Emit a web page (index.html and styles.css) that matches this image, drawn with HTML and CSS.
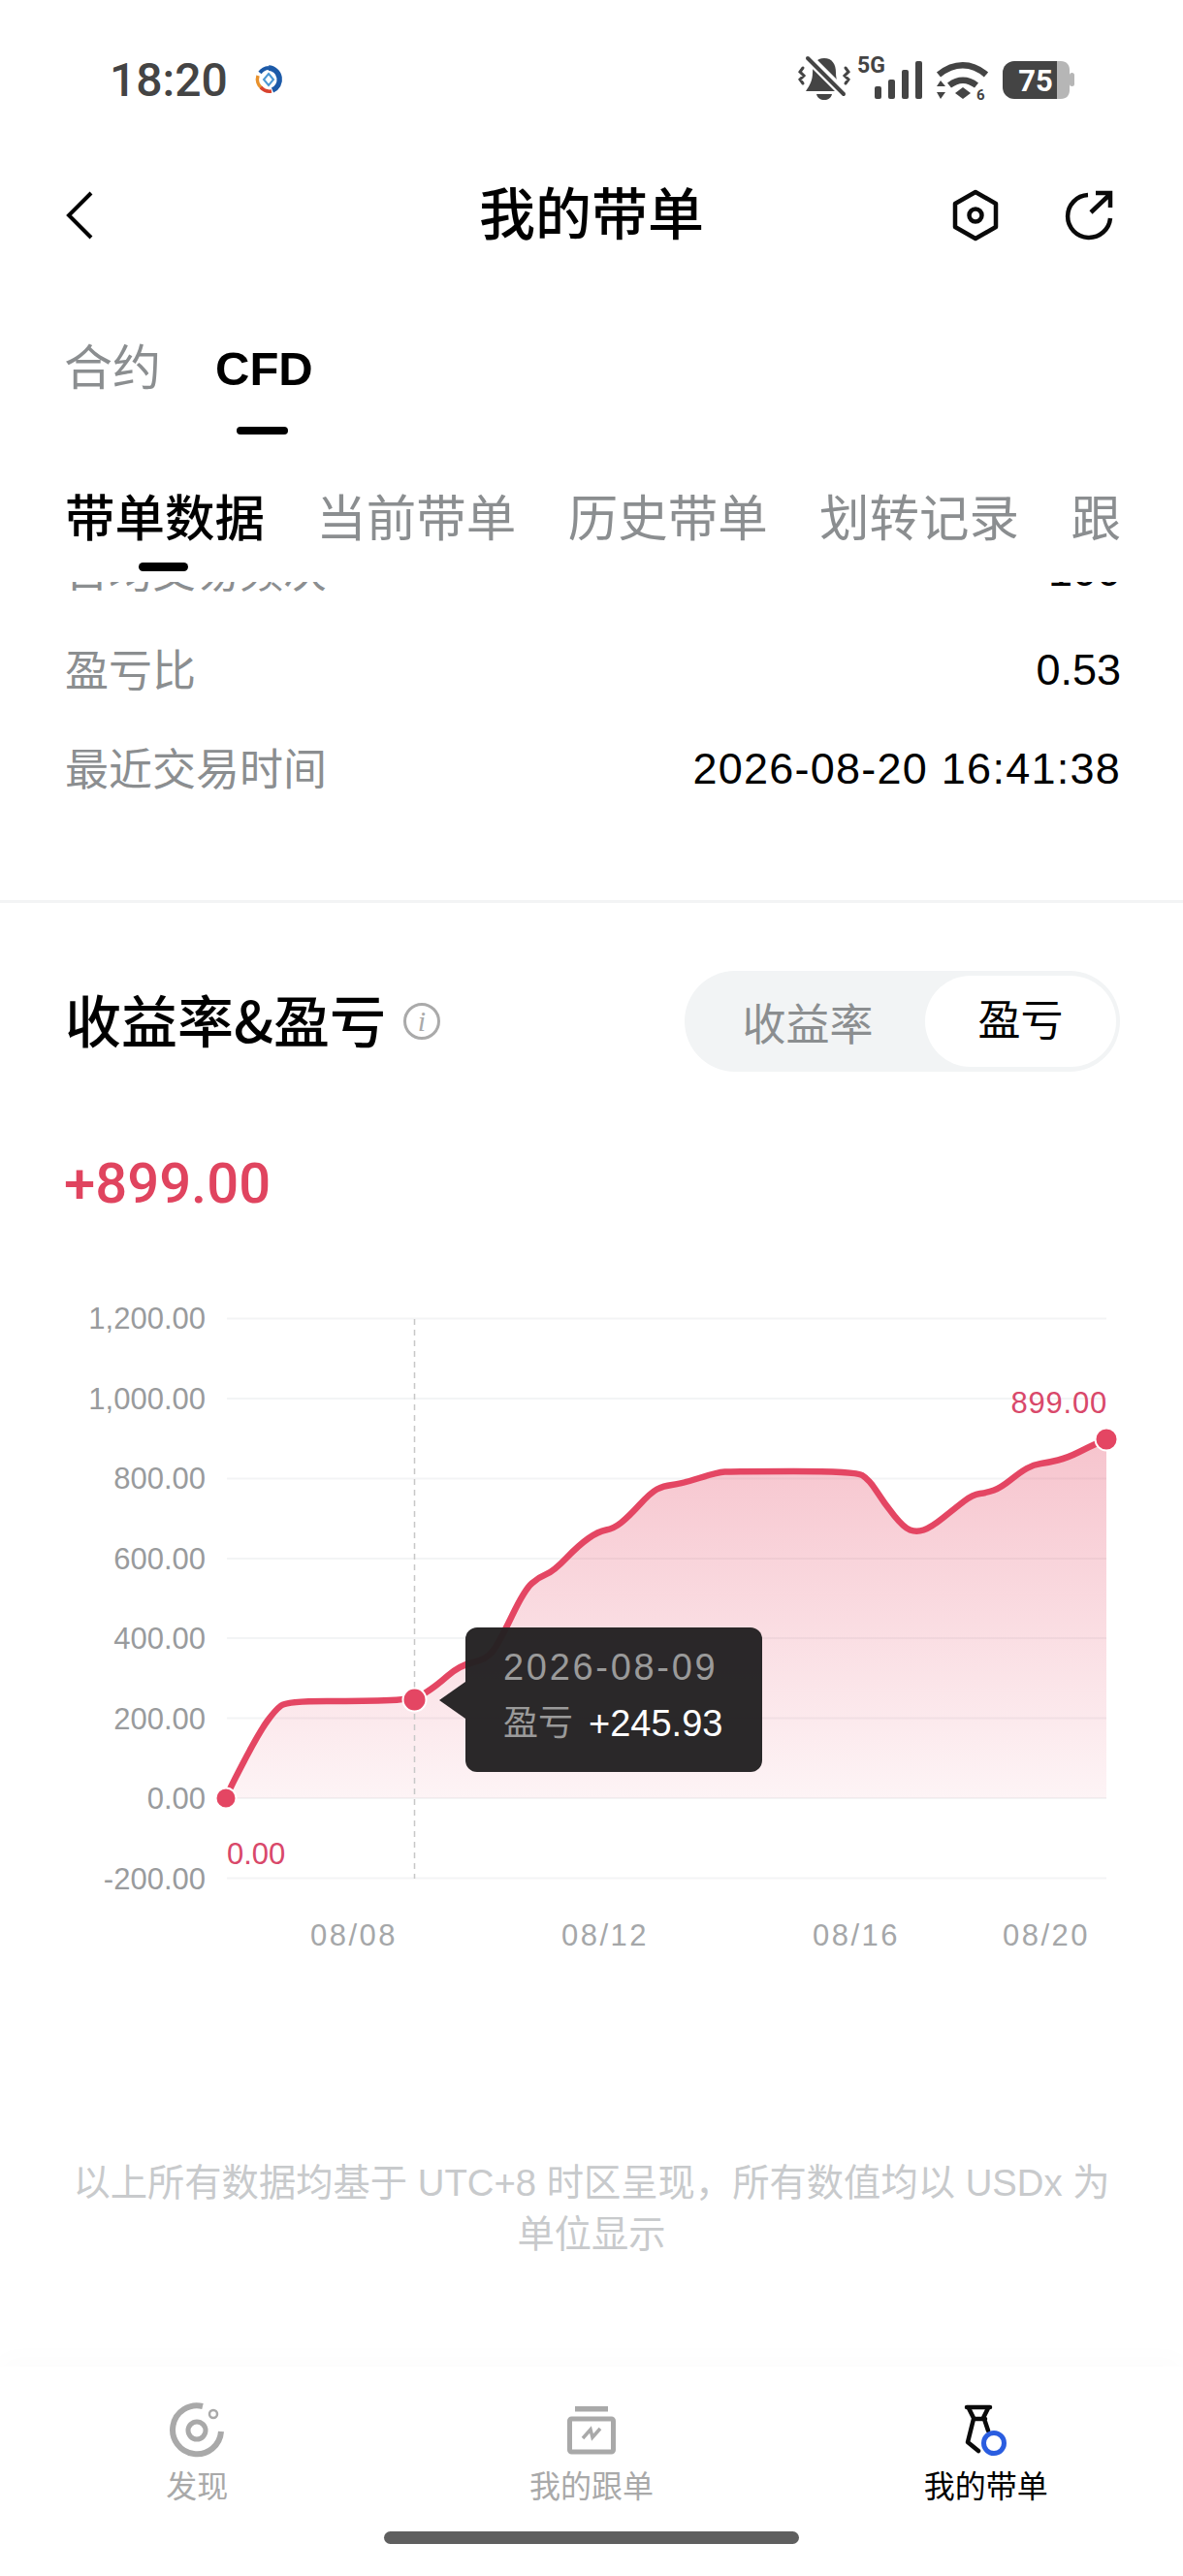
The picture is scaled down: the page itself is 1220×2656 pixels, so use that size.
FILE: index.html
```html
<!DOCTYPE html>
<html lang="zh-CN">
<head>
    <meta charset="UTF-8">
    <meta name="viewport" content="width=device-width, initial-scale=1.0">
    <title>我的带单</title>
    <link rel="stylesheet" href="styles.css">
</head>
<body>

    <!-- Status bar -->
    <div class="status-bar">
        <div class="status-left">
            <span class="status-time">18:20</span>
            <svg class="status-logo" viewBox="0 0 30 30">
                <path d="M15 3a12 12 0 0 1 4 23" fill="none" stroke="#1c5aa8" stroke-width="5.5"/>
                <path d="M15 3a12 12 0 0 0-9 5" fill="none" stroke="#1c5aa8" stroke-width="4"/>
                <path d="M4 11a12 12 0 0 0 4 13" fill="none" stroke="#e8912c" stroke-width="3.5"/>
                <path d="M7 23a12 12 0 0 0 11 4" fill="none" stroke="#d8432f" stroke-width="3.5"/>
                <path d="M15 9l5 6-5 6-5-6z" fill="none" stroke="#4a97d4" stroke-width="2"/>
            </svg>
        </div>
        <svg class="status-icons" viewBox="0 0 300 60">
            <!-- muted bell -->
            <path d="M30 10c-8 0-12 6-12 15 0 8-3 13-7 19h38c-4-6-7-11-7-19 0-9-4-15-12-15z" fill="#444"/>
            <path d="M22 47h16c-1 4-4 6-8 6s-7-2-8-6z" fill="#444"/>
            <path d="M9 5l43 43" stroke="#fff" stroke-width="10"/>
            <path d="M13 10l37 37" stroke="#444" stroke-width="4" stroke-linecap="round"/>
            <path d="M8 20l-3 4 4 4-4 4 3 4M52 20l3 4-4 4 4 4-3 4" fill="none" stroke="#444" stroke-width="3" stroke-linecap="round"/>
            <text class="icon-5g" x="64" y="25">5G</text>
            <!-- signal -->
            <rect x="82" y="39" width="7" height="13" rx="2" fill="#444"/>
            <rect x="96" y="32" width="7" height="20" rx="2" fill="#444"/>
            <rect x="110" y="22" width="7" height="30" rx="2" fill="#444"/>
            <rect x="124" y="13" width="7" height="39" rx="2" fill="#444"/>
            <!-- wifi -->
            <path d="M148 27c16-13 34-13 49 0M159 38c9-7 19-7 28 0" fill="none" stroke="#444" stroke-width="6.5"/>
            <path d="M165 46l8-6 8 6-8 6z" fill="#444"/>
            <path d="M146 39l4-6 5 6zM146 45h9l-5 7z" fill="#444"/>
            <text class="icon-wifi6" x="187" y="53">6</text>
            <!-- battery -->
            <path d="M226 13h44v39h-44a12 12 0 0 1-12-12V25a12 12 0 0 1 12-12z" fill="#444"/>
            <path d="M270 13h4c6 0 9 4 9 9v21c0 5-3 9-9 9h-4z" fill="#b6b6b6"/>
            <rect x="283" y="25" width="5" height="14" rx="2.5" fill="#b6b6b6"/>
            <text class="icon-battery" x="248" y="44">75</text>
        </svg>
    </div>

    <!-- Title bar -->
    <header class="title-bar">
        <svg class="back-icon" viewBox="0 0 30 50">
            <path d="M26 2L3 25l23 23" fill="none" stroke="#000" stroke-width="4"/>
        </svg>
        <h1>我的带单</h1>
        <div class="title-actions">
            <svg class="action-icon" viewBox="0 0 52 56">
                <path d="M26 4l21 12v24L26 52 5 40V16z" fill="none" stroke="#0a0a0a" stroke-width="4.5" stroke-linejoin="round"/>
                <circle cx="26" cy="28" r="6.5" fill="none" stroke="#0a0a0a" stroke-width="4.5"/>
            </svg>
            <svg class="action-icon" viewBox="0 0 52 56">
                <path d="M24 7a22 22 0 1 0 23 24" fill="none" stroke="#0a0a0a" stroke-width="4.5"/>
                <path d="M27 25l19-18M32 5h15v15" fill="none" stroke="#0a0a0a" stroke-width="4.5"/>
            </svg>
        </div>
    </header>

    <!-- Product tabs -->
    <div class="product-tabs">
        <a class="product-tab">合约</a>
        <a class="product-tab active">CFD</a>
    </div>

    <!-- Section tabs -->
    <nav class="section-tabs">
        <a class="section-tab active">带单数据</a>
        <a class="section-tab">当前带单</a>
        <a class="section-tab">历史带单</a>
        <a class="section-tab">划转记录</a>
        <a class="section-tab">跟</a>
    </nav>

    <!-- Stats, scrolled so the first row is cut -->
    <div class="stats">
        <div class="stats-list">
            <div class="stat-row"><span class="stat-label">日均交易频次</span><span class="stat-value">100</span></div>
            <div class="stat-row"><span class="stat-label">盈亏比</span><span class="stat-value">0.53</span></div>
            <div class="stat-row"><span class="stat-label">最近交易时间</span><span class="stat-value stat-date">2026-08-20 16:41:38</span></div>
        </div>
    </div>

    <!-- Profit section -->
    <section class="profit">
        <div class="profit-head">
            <div class="profit-title">
                <h2>收益率&amp;盈亏</h2>
                <span class="info-icon">i</span>
            </div>
            <div class="toggle">
                <span class="toggle-item">收益率</span>
                <span class="toggle-item active">盈亏</span>
            </div>
        </div>
        <div class="profit-total">+899.00</div>

        <div class="chart">
            <svg class="chart-svg" viewBox="0 1300 1220 740">
                <defs>
                    <linearGradient id="areaFill" x1="0" y1="0" x2="0" y2="1">
                        <stop offset="0" stop-color="#e44663" stop-opacity="0.32"/>
                        <stop offset="1" stop-color="#e44663" stop-opacity="0.06"/>
                    </linearGradient>
                </defs>

                <g class="grid-lines">
                    <line x1="234" x2="1141" y1="1359.5" y2="1359.5"/>
                    <line x1="234" x2="1141" y1="1442" y2="1442"/>
                    <line x1="234" x2="1141" y1="1524.5" y2="1524.5"/>
                    <line x1="234" x2="1141" y1="1607" y2="1607"/>
                    <line x1="234" x2="1141" y1="1689" y2="1689"/>
                    <line x1="234" x2="1141" y1="1771.5" y2="1771.5"/>
                    <line x1="234" x2="1141" y1="1854" y2="1854"/>
                    <line x1="234" x2="1141" y1="1936.5" y2="1936.5"/>
                </g>

                <g class="y-labels">
                    <text x="212" y="1370">1,200.00</text>
                    <text x="212" y="1453">1,000.00</text>
                    <text x="212" y="1535">800.00</text>
                    <text x="212" y="1618">600.00</text>
                    <text x="212" y="1700">400.00</text>
                    <text x="212" y="1783">200.00</text>
                    <text x="212" y="1865">0.00</text>
                    <text x="212" y="1948">-200.00</text>
                </g>

                <g class="x-labels">
                    <text x="365" y="2006">08/08</text>
                    <text x="624" y="2006">08/12</text>
                    <text x="883" y="2006">08/16</text>
                    <text x="1079" y="2006">08/20</text>
                </g>

                <path fill="url(#areaFill)" d="M233 1854L236.5 1846Q240 1838 254 1811.5Q268 1785 276 1774Q284 1763 290 1758.5Q296 1754 337 1754Q378 1754 403 1753Q428 1752 438.5 1745.5Q449 1739 461.5 1728Q474 1717 488 1714Q502 1711 508.5 1702Q515 1693 528 1666Q541 1639 548.5 1632.5Q556 1626 563.5 1623Q571 1620 584 1606.5Q597 1593 607 1586Q617 1579 625 1577.5Q633 1576 640.5 1570Q648 1564 659.5 1551.5Q671 1539 677.5 1535.5Q684 1532 693 1531Q702 1530 721 1524Q740 1518 747.5 1517.5Q755 1517 818.5 1517Q882 1517 889 1521Q896 1525 904 1537.5Q912 1550 922 1562.5Q932 1575 938.5 1577.5Q945 1580 952.5 1577.5Q960 1575 972.5 1565Q985 1555 994 1548Q1003 1541 1010.5 1540Q1018 1539 1025 1536.5Q1032 1534 1042 1526Q1052 1518 1059 1514Q1066 1510 1073.5 1509Q1081 1508 1091 1505.5Q1101 1503 1113 1497Q1125 1491 1132.5 1487.5L1141 1484V1854Z"/>
                <line class="cursor-line" x1="427.5" x2="427.5" y1="1360" y2="1937"/>
                <path class="profit-line" d="M233 1854L236.5 1846Q240 1838 254 1811.5Q268 1785 276 1774Q284 1763 290 1758.5Q296 1754 337 1754Q378 1754 403 1753Q428 1752 438.5 1745.5Q449 1739 461.5 1728Q474 1717 488 1714Q502 1711 508.5 1702Q515 1693 528 1666Q541 1639 548.5 1632.5Q556 1626 563.5 1623Q571 1620 584 1606.5Q597 1593 607 1586Q617 1579 625 1577.5Q633 1576 640.5 1570Q648 1564 659.5 1551.5Q671 1539 677.5 1535.5Q684 1532 693 1531Q702 1530 721 1524Q740 1518 747.5 1517.5Q755 1517 818.5 1517Q882 1517 889 1521Q896 1525 904 1537.5Q912 1550 922 1562.5Q932 1575 938.5 1577.5Q945 1580 952.5 1577.5Q960 1575 972.5 1565Q985 1555 994 1548Q1003 1541 1010.5 1540Q1018 1539 1025 1536.5Q1032 1534 1042 1526Q1052 1518 1059 1514Q1066 1510 1073.5 1509Q1081 1508 1091 1505.5Q1101 1503 1113 1497Q1125 1491 1132.5 1487.5L1141 1484"/>

                <circle class="chart-dot" cx="233" cy="1854" r="10.5"/>
                <circle class="chart-dot" cx="427.5" cy="1752.5" r="12"/>
                <circle class="chart-dot" cx="1141" cy="1484" r="11.5"/>

                <text class="point-label" x="234" y="1922">0.00</text>
                <text class="point-label end" x="1142" y="1457">899.00</text>
            </svg>

            <!-- Tooltip for the selected day -->
            <div class="chart-tooltip">
                <div class="tooltip-date">2026-08-09</div>
                <div class="tooltip-row"><span class="tooltip-label">盈亏</span><span class="tooltip-value">+245.93</span></div>
            </div>
        </div>

        <p class="footnote">以上所有数据均基于 UTC+8 时区呈现，所有数值均以 USDx 为单位显示</p>
    </section>

    <!-- Bottom navigation -->
    <footer class="bottom-nav">
        <div class="nav-items">
            <a class="nav-item">
                <svg class="nav-icon" viewBox="0 0 60 60">
                    <path d="M36 5a25 25 0 1 0 19 26" fill="none" stroke="#a9a9a9" stroke-width="6"/>
                    <circle cx="30" cy="30" r="9" fill="none" stroke="#a9a9a9" stroke-width="5"/>
                    <circle cx="47" cy="13" r="4" fill="none" stroke="#a9a9a9" stroke-width="2.5"/>
                </svg>
                <span>发现</span>
            </a>
            <a class="nav-item">
                <svg class="nav-icon" viewBox="0 0 60 60">
                    <rect x="13" y="5" width="34" height="5.5" fill="#a9a9a9"/>
                    <rect x="7.5" y="18" width="45" height="34" rx="2" fill="none" stroke="#a9a9a9" stroke-width="5"/>
                    <path d="M21 38l8-9 2 8 8-9" fill="none" stroke="#a9a9a9" stroke-width="3.5"/>
                </svg>
                <span>我的跟单</span>
            </a>
            <a class="nav-item active">
                <svg class="nav-icon" viewBox="0 0 60 60">
                    <path d="M10 6h24M12 7l5 10M32 7l-5 10M17 18h12M17 18l-6 24 11 9M28 18l4 12" fill="none" stroke="#0a0a0a" stroke-width="4.5" stroke-linejoin="round" stroke-linecap="round"/>
                    <circle cx="38" cy="43" r="10.5" fill="none" stroke="#2a5de0" stroke-width="5"/>
                </svg>
                <span>我的带单</span>
            </a>
        </div>
        <div class="home-bar"></div>
    </footer>

</body>
</html>
```
FILE: styles.css
```css
/* General Styles */
* {
    box-sizing: border-box;
}

body {
    font-family: "Liberation Sans", "Noto Sans CJK SC", sans-serif;
    margin: 0;
    width: 1220px;
    height: 2656px;
    overflow: hidden;
    background-color: #fff;
    color: #000;
    display: flex;
    flex-direction: column;
}

h1, h2, p {
    margin: 0;
}

/* Status bar */
.status-bar {
    height: 164px;
    display: flex;
    justify-content: space-between;
    align-items: center;
    padding: 0 100px 0 113px;
}

.status-left {
    display: flex;
    align-items: center;
    gap: 27px;
}

.status-time {
    font-family: Roboto, sans-serif;
    font-weight: 500;
    font-size: 48px;
    color: #444;
}

.status-logo {
    width: 30px;
    height: 30px;
}

.status-icons {
    width: 300px;
    height: 60px;
    margin-top: -4px;
}

.icon-5g {
    font-family: Roboto, sans-serif;
    font-weight: 700;
    font-size: 23px;
    fill: #444;
}

.icon-wifi6 {
    font-family: Roboto, sans-serif;
    font-weight: 700;
    font-size: 15px;
    fill: #444;
}

.icon-battery {
    font-family: Roboto, sans-serif;
    font-weight: 700;
    font-size: 31px;
    fill: #fff;
    text-anchor: middle;
}

/* Title bar */
.title-bar {
    height: 116px;
    position: relative;
    display: flex;
    align-items: center;
    justify-content: space-between;
    padding: 0 70px 0 68px;
}

.title-bar h1 {
    position: absolute;
    left: 0;
    right: 0;
    padding-bottom: 10px;
    text-align: center;
    font-size: 58px;
    font-weight: 500;
}

.back-icon {
    width: 30px;
    height: 50px;
}

.title-actions {
    display: flex;
    gap: 66px;
}

.action-icon {
    width: 52px;
    height: 56px;
}

/* Product tabs */
.product-tabs {
    height: 168px;
    display: flex;
    gap: 56px;
    padding: 0 66px;
    align-items: flex-start;
}

.product-tab {
    position: relative;
    font-size: 50px;
    line-height: 68px;
    margin-top: 66px;
    color: #8b8e90;
}

.product-tab.active {
    color: #000;
    font-size: 49px;
    font-weight: 700;
}

.product-tab.active::after {
    content: "";
    position: absolute;
    left: 22px;
    top: 94px;
    width: 53px;
    height: 8px;
    border-radius: 4px;
    background-color: #000;
}

/* Section tabs */
.section-tabs {
    height: 152px;
    display: flex;
    justify-content: space-between;
    padding: 0 64px 0 67px;
    align-items: flex-start;
}

.section-tab {
    position: relative;
    font-size: 51.5px;
    line-height: 68px;
    margin-top: 53px;
    color: #8b8e90;
}

.section-tab.active {
    color: #000;
    font-weight: 500;
}

.section-tab.active::after {
    content: "";
    position: absolute;
    left: 76px;
    top: 79px;
    width: 51px;
    height: 9px;
    border-radius: 5px;
    background-color: #000;
    z-index: 1;
}

/* Stats */
.stats {
    height: 331px;
    overflow: hidden;
    padding: 0 64px 0 67px;
    border-bottom: 3px solid #f3f4f5;
}

.stats-list {
    margin-top: -62px;
}

.stat-row {
    height: 102px;
    display: flex;
    justify-content: space-between;
    align-items: center;
}

.stat-label {
    font-size: 45px;
    margin-bottom: 6px;
    color: #8b8e90;
}

.stat-value {
    font-size: 45px;
}

.stat-date {
    letter-spacing: 1.25px;
}

/* Profit section */
.profit {
    flex: 1;
    display: flex;
    flex-direction: column;
}

.profit-head {
    display: flex;
    justify-content: space-between;
    align-items: center;
    margin-top: 70px;
    padding: 0 65px 0 67px;
}

.profit-title {
    display: flex;
    align-items: center;
    gap: 18px;
}

/* CJK family first so the ampersand takes the heading's weight */
.profit-title h2 {
    font-family: "Noto Sans CJK SC", sans-serif;
    font-size: 58px;
    font-weight: 500;
    line-height: 80px;
    padding-bottom: 6px;
}

.info-icon {
    width: 38px;
    height: 38px;
    border: 3px solid #aaa;
    border-radius: 50%;
    font-family: "Liberation Serif", serif;
    font-style: italic;
    font-size: 30px;
    line-height: 32px;
    text-align: center;
    color: #aaa;
}

.toggle {
    width: 449px;
    height: 104px;
    background-color: #f2f4f5;
    border-radius: 52px;
    display: flex;
    align-items: center;
    padding: 5px 4px 5px 0;
}

.toggle-item {
    flex: 1;
    padding-left: 6px;
    font-size: 45px;
    text-align: center;
    color: #8b8e90;
}

.toggle-item.active {
    flex: none;
    width: 197px;
    height: 94px;
    padding-left: 0;
    font-size: 44px;
    line-height: 94px;
    border-radius: 47px;
    background-color: #fff;
    color: #000;
}

.profit-total {
    margin-top: 80px;
    padding-left: 66px;
    font-family: Roboto, sans-serif;
    font-weight: 500;
    font-size: 58px;
    line-height: 70px;
    color: #e0445f;
}

/* Chart */
.chart {
    position: relative;
    height: 740px;
    margin-top: 45px;
}

.chart-svg {
    display: block;
    width: 1220px;
    height: 740px;
}

.grid-lines line {
    stroke: #f3f4f5;
    stroke-width: 2;
}

.y-labels text {
    font-size: 31px;
    fill: #999b9d;
    text-anchor: end;
}

.x-labels text {
    font-size: 31px;
    letter-spacing: 2.5px;
    fill: #a5a7a9;
    text-anchor: middle;
}

.cursor-line {
    stroke: #c8c8c8;
    stroke-width: 1.5;
    stroke-dasharray: 6 5;
}

.profit-line {
    fill: none;
    stroke: #e44663;
    stroke-width: 6.5;
    stroke-linejoin: round;
}

.chart-dot {
    fill: #e44663;
    stroke: #fff;
    stroke-width: 2;
}

.point-label {
    font-size: 31px;
    fill: #d9486a;
}

.point-label.end {
    letter-spacing: 0.8px;
    text-anchor: end;
}

.chart-tooltip {
    position: absolute;
    left: 480px;
    top: 378px;
    width: 306px;
    height: 149px;
    padding: 12px 0 0 39px;
    border-radius: 12px;
    background-color: rgba(35, 33, 34, 0.97);
}

.chart-tooltip::before {
    content: "";
    position: absolute;
    left: -27px;
    top: 56px;
    border-style: solid;
    border-width: 19px 27px 19px 0;
    border-color: transparent rgba(35, 33, 34, 0.97) transparent transparent;
}

.tooltip-date {
    font-size: 38px;
    line-height: 58px;
    letter-spacing: 2.7px;
    color: #9a9a9a;
}

.tooltip-row {
    display: flex;
    gap: 16px;
    line-height: 58px;
}

.tooltip-label {
    font-size: 36px;
    color: #9a9a9a;
}

.tooltip-value {
    font-size: 38px;
    color: #fff;
}

.footnote {
    margin-top: 184px;
    padding: 0 68px;
    font-size: 38.3px;
    line-height: 53px;
    text-align: center;
    color: #c8cacc;
}

/* Bottom navigation */
.bottom-nav {
    height: 216px;
    background-color: #fff;
    box-shadow: 0 -10px 24px rgba(0, 0, 0, 0.015);
}

.nav-items {
    display: grid;
    grid-template-columns: repeat(3, 1fr);
    padding-top: 36px;
}

.nav-item {
    display: flex;
    flex-direction: column;
    align-items: center;
    font-size: 32px;
    line-height: 40px;
    color: #a9a9a9;
}

.nav-item.active {
    color: #000;
}

.nav-icon {
    width: 60px;
    height: 60px;
    margin-bottom: 8px;
}

.home-bar {
    width: 428px;
    height: 13px;
    margin: 26px auto 0;
    border-radius: 7px;
    background-color: #5f5f5f;
}
```
